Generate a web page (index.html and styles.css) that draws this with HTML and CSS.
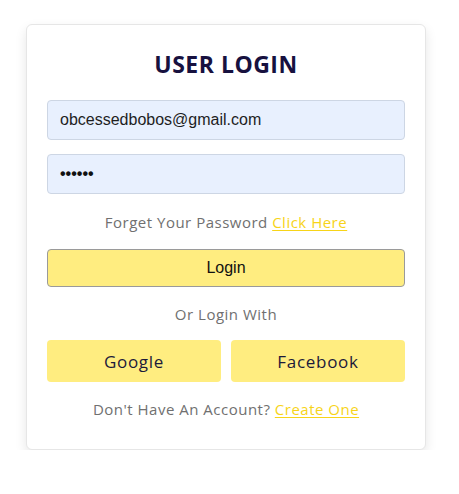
FILE: index.html
```html
<!DOCTYPE html>
<html>
<head>
<meta charset="utf-8">
<link rel="stylesheet" href="styles.css">
</head>
<body>
<div class="card">
  <h2 class="title">USER LOGIN</h2>
  <div class="field">obcessedbobos@gmail.com</div>
  <div class="field pass">••••••</div>
  <p class="note">Forget Your Password <a href="#" class="link">Click Here</a></p>
  <button class="login">Login</button>
  <p class="note or">Or Login With</p>
  <div class="social">
    <button class="sbtn">Google</button>
    <button class="sbtn">Facebook</button>
  </div>
  <p class="note signup">Don't Have An Account? <a href="#" class="link">Create One</a></p>
</div>
</body>
</html>
```
FILE: styles.css
```css
* { box-sizing: border-box; }
html, body { margin: 0; padding: 0; background: #fff; }
body { padding: 24px 0 0 26px; font-family: "Open Sans", sans-serif; }
.card {
  width: 400px;
  border: 1px solid #e6e6e6;
  border-radius: 6px;
  background: #fff;
  box-shadow: 0 5px 12px rgba(0,0,0,0.1);
  padding: 24px 20px 30px;
  display: flex;
  flex-direction: column;
}
.title {
  margin: 0 0 21px;
  font-size: 23px;
  line-height: 30px;
  font-weight: 700;
  text-align: center;
  color: #17113f;
  letter-spacing: 0.5px;
}
.field {
  height: 40px;
  border: 1px solid #cdd6e4;
  border-radius: 4px;
  background: #e8f0fe;
  font-family: "Liberation Sans", Arial, sans-serif;
  font-size: 16px;
  color: #1e1e1e;
  padding: 0 12px;
  display: flex;
  align-items: center;
}
.field + .field { margin-top: 14px; }
.pass { font-size: 16px; font-weight: 700; color: #111; }
.note {
  margin: 18px 0 0;
  line-height: 20px;
  font-size: 15px;
  letter-spacing: 0.5px;
  color: #707070;
  text-align: center;
}
.link { color: #f7d418; text-decoration: underline; text-underline-offset: 2px; }
.login {
  margin-top: 17px;
  height: 38px;
  border: 1px solid #9a9a9a;
  border-radius: 4px;
  background: #ffed80;
  font-family: "Liberation Sans", Arial, sans-serif;
  font-size: 16px;
  color: #111;
}
.or { margin-top: 17px; }
.social {
  margin-top: 16px;
  display: grid;
  grid-template-columns: 1fr 1fr;
  gap: 10px;
}
.sbtn {
  height: 42px;
  border: none;
  border-radius: 4px;
  background: #ffed80;
  font-family: "Open Sans", sans-serif;
  font-size: 17px;
  font-weight: 500;
  letter-spacing: 0.7px;
  color: #1c1a3a;
}
.signup { margin-top: 17px; }
```
